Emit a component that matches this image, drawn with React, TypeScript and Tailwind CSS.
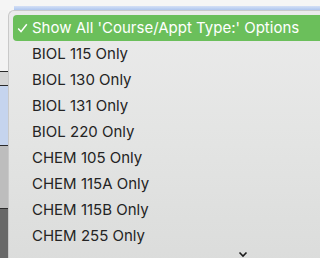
const OPTIONS = [
  "BIOL 115 Only",
  "BIOL 130 Only",
  "BIOL 131 Only",
  "BIOL 220 Only",
  "CHEM 105 Only",
  "CHEM 115A Only",
  "CHEM 115B Only",
  "CHEM 255 Only",
];

/* The page behind the popup: a bit of table showing down the left edge. */
function Backdrop() {
  return (
    <div className="flex h-full w-full flex-col bg-[#f5f5f5]">
      <div className="flex h-[10px] shrink-0">
        <div className="w-[14px]" />
        <div className="mt-[6px] flex-1 bg-gradient-to-b from-[#d4e0f5] to-[#aec6ef]" />
      </div>
      <div className="flex w-[8px] flex-1 flex-col">
        <div className="h-[61px] bg-[#f3f3f3]" />
        <div className="h-px bg-[#2a2a2a]" />
        <div className="h-[13px] bg-[#d5d5d5]" />
        <div className="h-px bg-[#2a2a2a]" />
        <div className="h-[59px] bg-[#c5d4ee]" />
        <div className="h-px bg-[#2a2a2a]" />
        <div className="h-[62px] bg-[#bdbdbd]" />
        <div className="h-px bg-[#2a2a2a]" />
        <div className="flex-1 bg-[#686868]" />
      </div>
    </div>
  );
}

function Chevron() {
  return (
    <svg width="10" height="7" viewBox="0 0 10 7" className="text-[#1a1a1a]">
      <path d="M1.5 1.5 L5 5 L8.5 1.5" fill="none" stroke="currentColor" strokeWidth="1.6" />
    </svg>
  );
}

function Check() {
  return (
    <svg width="11" height="10" viewBox="0 0 11 10" className="mr-[4px] text-white">
      <path d="M1.2 5.6 L4 8.6 L9.8 1.2" fill="none" stroke="currentColor" strokeWidth="1.5" />
    </svg>
  );
}

export default function App() {
  return (
    <div
      className="relative h-[258px] w-[320px] overflow-hidden"
      style={{ fontFamily: "Inter, 'Liberation Sans', sans-serif" }}
    >
      <Backdrop />
      <div className="absolute left-[8px] top-[10px] h-[270px] w-[330px] rounded-tl-[6px] border-l border-t border-[#c9c9c9] bg-gradient-to-b from-[#ebebeb] via-[#e3e4e3] to-[#dadbda] pl-[4px] pt-[4px]">
        <div className="flex h-[26px] items-center rounded-l-[4px] bg-[#6bbf5b] pl-[4px] text-[15px] text-white">
          <Check />
          <span>Show All 'Course/Appt Type:' Options</span>
        </div>
        {OPTIONS.map((o) => (
          <div key={o} className="flex h-[26px] items-center pl-[19px] pt-[1px] text-[15px] text-[#242424]">
            {o}
          </div>
        ))}
        <div className="flex pl-[225px] pt-[2px]">
          <Chevron />
        </div>
      </div>
    </div>
  );
}
